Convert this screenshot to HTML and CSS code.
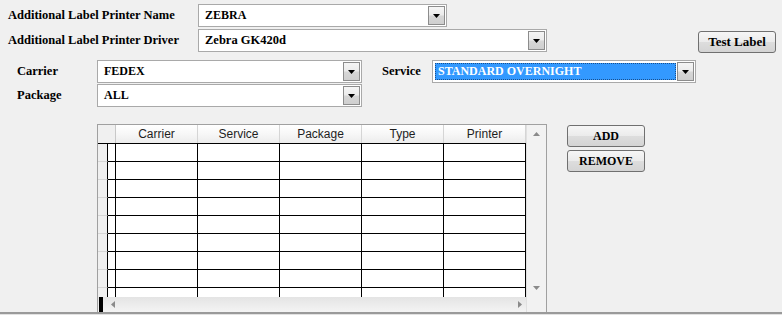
FILE: index.html
```html
<!DOCTYPE html>
<html lang="en">
<head>
    <meta charset="UTF-8">
    <title>Additional Label Printer</title>
    <link rel="stylesheet" href="styles.css">
</head>
<body>
    <div class="form">
        <div class="line">
            <span class="lbl-wide">Additional Label Printer Name</span>
            <div class="combo w-name"><span class="val caps">ZEBRA</span><span class="drop"><svg width="7" height="4"><path d="M0 0h7L3.5 4z"/></svg></span></div>
        </div>
        <div class="line">
            <span class="lbl-wide">Additional Label Printer Driver</span>
            <div class="combo w-driver"><span class="val">Zebra GK420d</span><span class="drop"><svg width="7" height="4"><path d="M0 0h7L3.5 4z"/></svg></span></div>
            <button class="btn test">Test Label</button>
        </div>

        <div class="filters">
            <span>Carrier</span>
            <div class="combo"><span class="val caps">FEDEX</span><span class="drop"><svg width="7" height="4"><path d="M0 0h7L3.5 4z"/></svg></span></div>
            <span class="lbl-service">Service</span>
            <div class="combo sel"><span class="val caps">STANDARD OVERNIGHT</span><span class="drop"><svg width="7" height="4"><path d="M0 0h7L3.5 4z"/></svg></span></div>
            <span>Package</span>
            <div class="combo"><span class="val caps">ALL</span><span class="drop"><svg width="7" height="4"><path d="M0 0h7L3.5 4z"/></svg></span></div>
        </div>

        <div class="lower">
            <div class="table">
                <div class="viewport">
                    <div class="head">
                        <div class="hc corner"></div>
                        <div class="hc">Carrier</div>
                        <div class="hc">Service</div>
                        <div class="hc">Package</div>
                        <div class="hc">Type</div>
                        <div class="hc">Printer</div>
                    </div>
                    <div class="rows" id="rows"></div>
                </div>
                <div class="vscroll">
                    <svg width="7" height="4"><path d="M0 4h7L3.5 0z"/></svg>
                    <svg width="7" height="4"><path d="M0 0h7L3.5 4z"/></svg>
                </div>
                <div class="hscroll">
                    <span class="caret"></span>
                    <svg class="arr-l" width="4" height="7"><path d="M4 0v7L0 3.5z"/></svg>
                    <svg class="arr-r" width="4" height="7"><path d="M0 0v7L4 3.5z"/></svg>
                </div>
            </div>
            <div class="actions">
                <button class="btn caps">ADD</button>
                <button class="btn caps">REMOVE</button>
            </div>
        </div>
    </div>
    <div class="baseline"></div>

    <script>
        // empty grid rows
        var rows = document.getElementById("rows");
        for (var i = 0; i < 9; i++) {
            for (var c = 0; c < 7; c++) {
                var cell = document.createElement("div");
                cell.className = c === 0 ? "rc rh" : "rc";
                rows.appendChild(cell);
            }
        }
    </script>
</body>
</html>
```

FILE: styles.css
```css
body {
    margin: 0;
    width: 782px;
    height: 315px;
    overflow: hidden;
    background: #f0f0f0;
    font: bold 12.5px "Liberation Serif", "Times New Roman", serif;
    color: #000;
    display: flex;
    flex-direction: column;
}
.caps {
    font-size: 12px;
}
.form {
    flex: 1;
    padding-top: 4px;
    box-sizing: border-box;
    display: flex;
    flex-direction: column;
}
.line {
    display: flex;
    align-items: center;
    padding-left: 8px;
    height: 23px;
}
.line + .line {
    margin-top: 2px;
}
.lbl-wide {
    width: 190px;
}
.combo {
    display: flex;
    align-items: center;
    height: 23px;
    box-sizing: border-box;
    border: 1px solid #a9a9a9;
    background: #fff;
}
.w-name {
    width: 249px;
}
.w-driver {
    width: 349px;
}
.combo .val {
    flex: 1;
    padding-left: 6px;
    white-space: nowrap;
}
.combo .drop {
    width: 17px;
    height: 19px;
    margin-right: 1px;
    box-sizing: border-box;
    border: 1px solid #8c8c8c;
    background: linear-gradient(#f5f5f5 0%, #ececec 45%, #d6d6d6 55%, #cfcfcf 100%);
    display: flex;
    justify-content: center;
    padding-top: 7px;
}
.combo .drop svg {
    fill: #000;
}
.combo.sel .val {
    margin: 0 1px 0 2px;
    height: 17px;
    line-height: 17px;
    padding-left: 3px;
    background: #3399ff;
    color: #fff;
    outline: 1px dotted #1a4f8c;
    outline-offset: -1px;
}
.btn {
    height: 22px;
    width: 78px;
    padding: 0;
    border: 1px solid #707070;
    border-radius: 3px;
    background: linear-gradient(#f6f6f6 0%, #ebebeb 50%, #dddddd 51%, #d4d4d4 100%);
    font: bold 13px "Liberation Serif", "Times New Roman", serif;
    color: #000;
}
.btn.caps {
    font-size: 12px;
}
.test {
    margin-left: auto;
    margin-right: 6px;
    margin-top: 2px;
}
.filters {
    display: grid;
    grid-template-columns: 80px 265px 70px 264px;
    row-gap: 1px;
    align-items: center;
    padding-left: 17px;
    margin-top: 8px;
}
.lbl-service {
    padding-left: 20px;
}
.lower {
    flex: 1;
    display: flex;
    align-items: flex-start;
    padding-left: 97px;
    margin-top: 17px;
}
.table {
    width: 450px;
    height: 188px;
    box-sizing: border-box;
    border: 1px solid #a0a0a0;
    border-bottom: none;
    display: grid;
    grid-template-columns: 428px 20px;
    grid-template-rows: 1fr 15px;
    background: #fff;
}
.viewport {
    overflow: hidden;
}
.head {
    display: grid;
    grid-template-columns: 18px repeat(5, 82px);
    height: 18px;
}
.hc {
    box-sizing: border-box;
    border-right: 1px solid #d5d5d5;
    background: linear-gradient(#ffffff 0%, #f7f7f7 50%, #ececec 100%);
    font: 12px "Liberation Sans", Arial, sans-serif;
    color: #1e1e1e;
    text-align: center;
    line-height: 18px;
}
.corner {
    background: #f0f0f0;
    border-right: 1px solid #c8c8c8;
}
.rows {
    display: grid;
    grid-template-columns: 10px 8px repeat(5, 82px);
    border-top: 1px solid #000;
}
.rc {
    height: 17px;
    border-right: 1px solid #000;
    border-bottom: 1px solid #000;
}
.rh {
    background: #f0f0f0;
    border-bottom-color: #d6d6d6;
}
.vscroll {
    grid-row: 1 / 3;
    grid-column: 2;
    background: #f2f2f2;
    border-left: 1px solid #e0e0e0;
    display: flex;
    flex-direction: column;
    justify-content: space-between;
    align-items: center;
    padding: 7px 0 22px;
}
.vscroll svg,
.hscroll svg {
    fill: #8a8a8a;
}
.hscroll {
    grid-row: 2;
    grid-column: 1;
    background: linear-gradient(#e4e4e4, #f4f4f4);
    display: flex;
    align-items: center;
    padding-left: 1px;
}
.caret {
    width: 4px;
    height: 15px;
    background: #000;
}
.arr-l {
    margin-left: 8px;
}
.arr-r {
    margin-left: auto;
    margin-right: 4px;
}
.actions {
    display: flex;
    flex-direction: column;
    gap: 3px;
    margin-left: 20px;
    margin-top: 1px;
}
.baseline {
    height: 3px;
    border-top: 2px solid #9a9a9a;
    background: #e2e2e2;
}
```
